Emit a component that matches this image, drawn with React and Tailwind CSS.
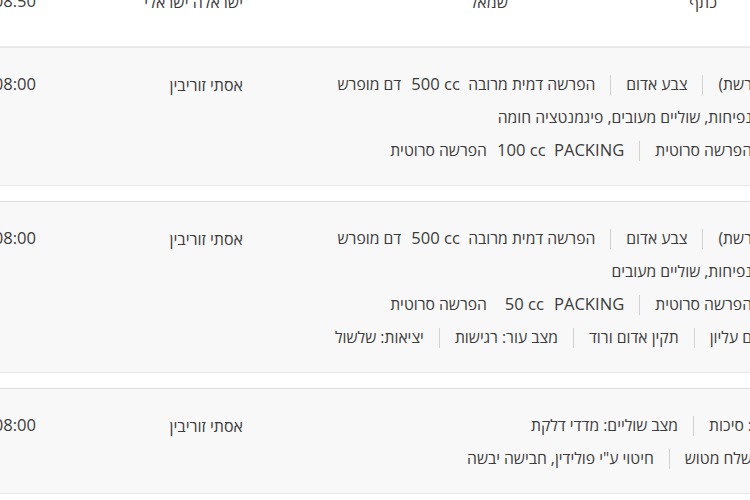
import React from "react";

const Sep = () => (
  <span className="mx-[15px] inline-block h-[20px] w-px shrink-0 bg-[#d2d2d2]" />
);

const Line = ({ children }) => (
  <div className="flex h-[33px] items-center whitespace-nowrap">{children}</div>
);

const Group = ({ name, amount, desc, latinName }) => (
  <span className="flex items-center gap-[10px]">
    <span className={latinName ? "text-[16.6px]" : ""}>{name}</span>
    <span dir="ltr" className="w-[47px] text-right text-[16.6px]">{amount}</span>
    <span>{desc}</span>
  </span>
);

const Row = ({ lines, first }) => (
  <div
    className={
      "flex items-start border-y bg-[#f8f8f8] pt-[20px] pb-[18px] " +
      (first ? "border-t-[#e6e6e6] border-b-[#e8e8e8]" : "mt-[15px] border-t-[#dcdcdc] border-b-[#e8e8e8]")
    }
  >
    <div className="-mr-[2px] w-[509px] shrink-0 text-[15.7px]">{lines}</div>
    <div className="flex h-[33px] w-[207px] shrink-0 items-center">אסתי זוריבין</div>
    <div className="flex h-[33px] w-[100px] shrink-0 items-center text-[16.6px]">08:00</div>
  </div>
);

export default function App() {
  return (
    <div
      dir="rtl"
      className="h-[500px] w-[750px] overflow-hidden bg-white text-[16px] text-[#3c3c3c]"
      style={{ fontFamily: "'Open Sans', 'DejaVu Sans', sans-serif" }}
    >
      {/* previous (white) row */}
      <div className="flex h-[47px] items-end border-b border-[#ededed] pb-[28px]">
        <div className="flex h-[33px] w-[242px] shrink-0 items-center pr-[33px]">כתף</div>
        <div className="flex h-[33px] w-[265px] shrink-0 items-center">שמאל</div>
        <div className="flex h-[33px] w-[207px] shrink-0 items-center">ישראלה ישראלי</div>
        <div className="flex h-[33px] w-[100px] shrink-0 items-center text-[16.6px]">08:50</div>
      </div>

      <Row
        first
        lines={
          <>
            <Line>
              <span>רשת)</span>
              <Sep />
              <span>צבע אדום</span>
              <Sep />
              <Group name="הפרשה דמית מרובה" amount="500 cc" desc="דם מופרש" />
            </Line>
            <Line>
              <span>נפיחות, שוליים מעובים, פיגמנטציה חומה</span>
            </Line>
            <Line>
              <span>הפרשה סרוטית</span>
              <Sep />
              <Group latinName name="PACKING" amount="100 cc" desc="הפרשה סרוטית" />
            </Line>
          </>
        }
      />

      <Row
        lines={
          <>
            <Line>
              <span>רשת)</span>
              <Sep />
              <span>צבע אדום</span>
              <Sep />
              <Group name="הפרשה דמית מרובה" amount="500 cc" desc="דם מופרש" />
            </Line>
            <Line>
              <span>נפיחות, שוליים מעובים</span>
            </Line>
            <Line>
              <span>הפרשה סרוטית</span>
              <Sep />
              <Group latinName name="PACKING" amount="50 cc" desc="הפרשה סרוטית" />
            </Line>
            <Line>
              <span>ם עליון</span>
              <Sep />
              <span>תקין אדום ורוד</span>
              <Sep />
              <span>מצב עור: רגישות</span>
              <Sep />
              <span>יציאות: שלשול</span>
            </Line>
          </>
        }
      />

      <Row
        lines={
          <>
            <Line>
              <span>: סיכות</span>
              <Sep />
              <span>מצב שוליים: מדדי דלקת</span>
            </Line>
            <Line>
              <span>שלח מטוש</span>
              <Sep />
              <span>חיטוי ע"י פולידין, חבישה יבשה</span>
            </Line>
          </>
        }
      />
    </div>
  );
}
